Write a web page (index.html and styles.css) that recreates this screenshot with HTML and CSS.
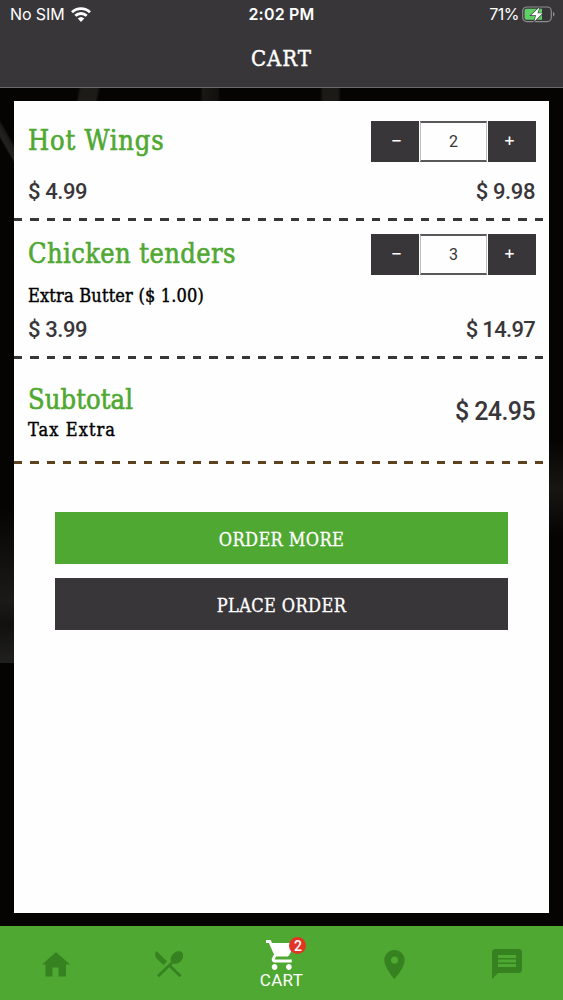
FILE: index.html
```html
<!DOCTYPE html>
<html lang="en">
<head>
    <meta charset="UTF-8">
    <meta name="viewport" content="width=device-width, initial-scale=1, maximum-scale=1, user-scalable=no">
    <title>Cart</title>
    <link rel="stylesheet" href="styles.css">
</head>
<body>
<div class="header">
    <div class="status-bar">
        <div class="status-left">
            <span>No SIM</span>
            <svg class="wifi" viewBox="0 0 20 15" width="20" height="15">
                <g fill="none" stroke="#fff" stroke-width="2.8">
                    <path d="M1 5.2a13 13 0 0 1 18 0"/>
                    <path d="M4.3 8.8a8.2 8.2 0 0 1 11.4 0"/>
                </g>
                <path fill="#fff" d="M6.7 11.5a4.8 4.8 0 0 1 6.6 0L10 15z"/>
            </svg>
        </div>
        <div class="status-time">2:02 PM</div>
        <div class="status-right">
            <span>71%</span>
            <svg viewBox="0 0 33 17" width="33" height="17">
                <rect x=".7" y="1" width="28.6" height="14.6" rx="4" fill="none" stroke="#8d8c8e" stroke-width="1.2"/>
                <path fill="#8d8c8e" d="M31 6c2 .6 2 4 0 4.600z"/>
                <path fill="#5fd068" d="M4.500 2.800h15.500v11H4.500a2 2 0 0 1-2-2V4.800a2 2 0 0 1 2-2z"/>
                <path fill="#fff" stroke="#39363a" stroke-width="1.300" paint-order="stroke" d="M17.500 1.300L9 9.300h5L12.300 15.500 20.500 7.300h-5z"/>
            </svg>
        </div>
    </div>
    <h1 class="title">CART</h1>
</div>

<div class="content">
    <div class="card">
        <div class="item">
            <div class="row item-head">
                <h2 class="name wings">Hot Wings</h2>
                <div class="stepper">
                    <button type="button" class="minus">−</button>
                    <span class="qty">2</span>
                    <button type="button" class="plus">+</button>
                </div>
            </div>
            <div class="row prices">
                <span>$ 4.99</span>
                <span>$ 9.98</span>
            </div>
        </div>
        <div class="item item-extra">
            <div class="row item-head">
                <h2 class="name tenders">Chicken tenders</h2>
                <div class="stepper">
                    <button type="button" class="minus">−</button>
                    <span class="qty">3</span>
                    <button type="button" class="plus">+</button>
                </div>
            </div>
            <p class="extra">Extra Butter ($ 1.00)</p>
            <div class="row prices">
                <span>$ 3.99</span>
                <span class="narrow">$ 14.97</span>
            </div>
        </div>
        <div class="subtotal row">
            <div>
                <h2 class="name sub">Subtotal</h2>
                <p class="tax">Tax Extra</p>
            </div>
            <span class="total">$ 24.95</span>
        </div>
        <div class="actions">
            <button type="button" class="order-more">ORDER MORE</button>
            <button type="button" class="place-order">PLACE ORDER</button>
        </div>
    </div>
</div>

<div class="tabs">
    <div class="tab">
        <svg viewBox="0 0 28 25" width="28" height="25"><path d="M14 0L0 12.500h3.500V24.500h7V15.500h6v9h7.500V12.500H28z"/></svg>
    </div>
    <div class="tab">
        <svg viewBox="0 0 28 27" width="28" height="27">
            <path d="M1.500 0L12 10.500 8.500 14 2 8C-.5 5.500-.3 2 1.500 0z"/>
            <path d="M16.200 10.800c-1.500-3 .2-7 3.300-9.100 3-2 6.300-1.800 7.700-.3s1.500 4.800-.6 7.800c-2.100 2.900-5.700 4.400-8.600 3.200L4 26.300l-2-2z"/>
            <path d="M13.300 15.200l2-2L26.500 24.300l-2 2z"/>
        </svg>
    </div>
    <div class="tab active">
        <div class="cart-icon">
            <svg viewBox="1 2 21 20" width="30" height="30" preserveAspectRatio="none"><path d="M7 18c-1.100 0-1.990.9-1.990 2S5.900 22 7 22s2-.9 2-2-.9-2-2-2zM1 2v2h2l3.600 7.590-1.350 2.450c-.16.280-.25.610-.25.960 0 1.100.9 2 2 2h12v-2H7.420c-.14 0-.25-.11-.25-.25l.03-.12.900-1.630h7.450c.75 0 1.410-.41 1.750-1.030l3.580-6.490c.08-.14.120-.31.120-.48 0-.55-.45-1-1-1H5.210l-.94-2H1zm16 16c-1.100 0-1.990.9-1.990 2s.89 2 1.990 2 2-.9 2-2-.9-2-2-2z"/></svg>
            <span class="badge">2</span>
        </div>
        <span class="tab-label">CART</span>
    </div>
    <div class="tab">
        <svg viewBox="5 2 14 20" width="21" height="29"><path d="M12 2C8.130 2 5 5.130 5 9c0 5.250 7 13 7 13s7-7.750 7-13c0-3.870-3.130-7-7-7zm0 9.500c-1.380 0-2.500-1.120-2.500-2.500s1.120-2.500 2.500-2.500 2.500 1.120 2.500 2.500-1.120 2.500-2.500 2.500z"/></svg>
    </div>
    <div class="tab">
        <svg viewBox="2 2 20 20" width="30" height="30"><path d="M20 2H4c-1.100 0-1.990.9-1.990 2L2 22l4-4h14c1.100 0 2-.9 2-2V4c0-1.100-.9-2-2-2zm-2 12H6v-2h12v2zm0-3H6V9h12v2zm0-3H6V6h12v2z"/></svg>
    </div>
</div>
</body>
</html>
```
FILE: styles.css
```css
* {
    margin: 0;
    padding: 0;
    box-sizing: border-box;
}

body {
    width: 563px;
    height: 1000px;
    display: flex;
    flex-direction: column;
    overflow: hidden;
    background: #050402;
    color: #39363a;
    font-family: "Roboto Slab", "DejaVu Serif Condensed", "DejaVu Serif", serif;
}

button {
    border: none;
    outline: none;
    color: #ffffff;
    background: #39363a;
    font-family: inherit;
}

h1, h2 {
    font-weight: normal;
}

.header {
    height: 88px;
    background: #39363a;
    border-bottom: 1px solid #6c6a68;
    color: #ffffff;
}

.status-bar {
    display: grid;
    grid-template-columns: 1fr auto 1fr;
    align-items: center;
    height: 29px;
    padding: 0 8px 0 10px;
    font: 16px/29px Inter, sans-serif;
}

.status-left,
.status-right {
    display: flex;
    align-items: center;
    gap: 7px;
}

.status-left {
    gap: 6px;
    letter-spacing: -0.1px;
}

.status-right {
    justify-content: flex-end;
    gap: 3px;
    letter-spacing: -0.5px;
}

.status-time {
    margin-right: 2px;
    font-weight: 600;
    letter-spacing: 0.2px;
}

.title {
    height: 58px;
    line-height: 59px;
    text-align: center;
    font-size: 22px;
    letter-spacing: 1px;
    -webkit-text-stroke: 0.4px;
}

.content {
    height: 838px;
    padding: 13px 14px;
    background:
        linear-gradient(100deg, transparent 77px, #1c1b18 80px, #1c1b18 96px, transparent 99px) 0 0 / 563px 13px no-repeat,
        linear-gradient(90deg, transparent 200px, #191815 203px, #11100d 218px, transparent 220px, transparent 320px, #1b1a17 323px, #1b1a17 338px, transparent 341px) 0 0 / 563px 13px no-repeat,
        linear-gradient(60deg, transparent 40%, #242321 45%, #1c1b19 58%, transparent 64%) 0 25px / 14px 60px no-repeat,
        linear-gradient(#050402, #1b1a18 60%, #11100e 75%, #20201e) 0 420px / 14px 155px no-repeat,
        linear-gradient(#050402, #171613, #050402) 549px 350px / 14px 100px no-repeat,
        #050402;
}

.card {
    height: 812px;
    background: #fefefe;
}

.row {
    display: flex;
    justify-content: space-between;
}

.item,
.subtotal {
    padding: 0 14px;
    background: repeating-linear-gradient(90deg, #39363a 0 8.300px, transparent 8.300px 16.270px) 0 100% / 100% 3px no-repeat;
}

.item {
    height: 120px;
    padding-top: 20px;
}

.item-extra {
    height: 138px;
    padding-top: 13px;
}

.item-head {
    height: 41px;
    margin-bottom: 12px;
}

.item-extra .item-head {
    margin-bottom: 7px;
}

.name {
    color: #4fa832;
    font-size: 27px;
    line-height: 39px;
    white-space: nowrap;
    -webkit-text-stroke: 0.6px;
}

.wings {
    letter-spacing: 0.8px;
}

.tenders {
    letter-spacing: 0.4px;
}

.sub {
    line-height: 38px;
    letter-spacing: 0.1px;
}

.stepper {
    display: flex;
    gap: 1px;
    width: 165px;
    height: 41px;
    margin-right: -1px;
    font-family: Roboto, sans-serif;
}

.stepper button {
    width: 48px;
    height: 41px;
    padding-bottom: 4px;
    font: 400 18px Inter, sans-serif;
}

.stepper .minus {
    padding-left: 3px;
}

.stepper .plus {
    padding-right: 5px;
}

.qty {
    flex: 1;
    border: 1px solid #bdbcbd;
    border-top: 2px solid #5b585c;
    border-bottom: 2px solid #5b585c;
    text-align: center;
    font-size: 16px;
    line-height: 38px;
}

.prices,
.total {
    font-family: "Roboto Slab", Roboto, sans-serif;
    font-weight: 500;
}

.prices {
    font-size: 22px;
    line-height: 36px;
    letter-spacing: -0.4px;
}

.narrow {
    letter-spacing: -0.7px;
}

.extra,
.tax {
    color: #000000;
    font-size: 18px;
    -webkit-text-stroke: 0.4px;
}

.extra {
    line-height: 28px;
    margin-bottom: 2px;
    letter-spacing: 0.2px;
}

.subtotal {
    height: 105px;
    padding-top: 22px;
    background-image: repeating-linear-gradient(90deg, #5e4220 0 8.300px, transparent 8.300px 16.270px);
}

.tax {
    line-height: 22px;
    letter-spacing: 1.1px;
}

.total {
    padding-top: 12px;
    font-size: 25px;
    line-height: 38px;
    letter-spacing: -0.6px;
}

.actions {
    display: flex;
    flex-direction: column;
    gap: 14px;
    padding: 48px 41px 0;
}

.actions button {
    height: 52px;
    padding-top: 2px;
    font-size: 18px;
    letter-spacing: 0.4px;
    -webkit-text-stroke: 0.3px;
}

.actions .order-more {
    background: #4fa832;
}

.tabs {
    display: grid;
    grid-template-columns: repeat(5, 1fr);
    height: 74px;
    background: #4fa832;
}

.tab {
    display: flex;
    flex-direction: column;
    align-items: center;
    justify-content: center;
    padding-top: 2px;
    fill: #368120;
}

.tab.active {
    justify-content: flex-start;
    padding-top: 14px;
    fill: #ffffff;
    color: #ffffff;
}

.cart-icon {
    position: relative;
    height: 30px;
}

.badge {
    position: absolute;
    top: -3px;
    left: 23px;
    width: 17px;
    height: 17px;
    border-radius: 50%;
    background: #e23325;
    text-align: center;
    font: 500 14px/18px Roboto, sans-serif;
}

.tab-label {
    font: 17px/20px Roboto, sans-serif;
    letter-spacing: 0.3px;
}
```
